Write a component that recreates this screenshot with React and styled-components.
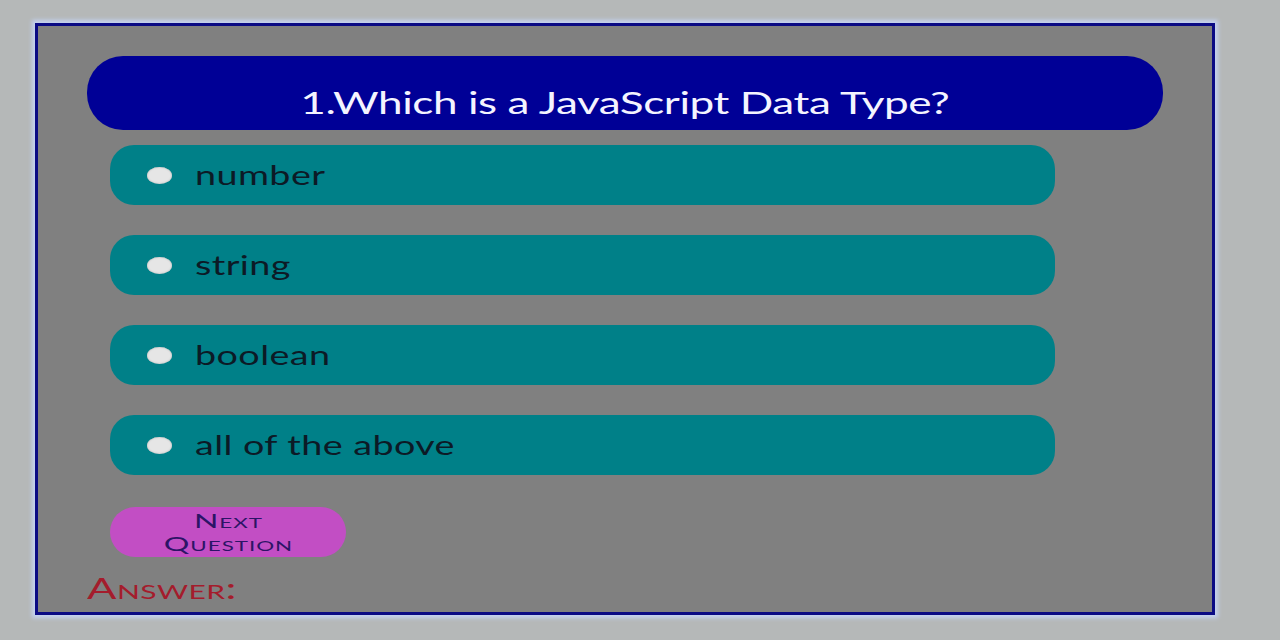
import React, { useState } from "react"
import styled, { createGlobalStyle } from "styled-components"

const GlobalStyle = createGlobalStyle`
    html, body {
        margin: 0;
        padding: 0;
        background: #b5b8b8;
        font-family: "Lato", "Open Sans", sans-serif;
    }
`

const Page = styled.div`
    height: 640px;
    padding: 23px 0 0 35px;
    box-sizing: border-box;
`

const Quiz = styled.div`
    width: 1180px;
    height: 592px;
    box-sizing: border-box;
    border: 3px solid #0a0a84;
    background: #808080;
    box-shadow: 0 0 4px 3px #c4d2f2;
    padding: 30px 0 0 49px;
    display: flex;
    flex-direction: column;
`

// the face in the picture is drawn wide, so the words are stretched sideways
const Wide = styled.span`
    display: inline-block;
    transform: scaleX(${ p => p.$x || 1.45 });
    transform-origin: ${ p => p.$origin || "left center" };
`

const Question = styled.h1`
    margin: 0;
    width: 1076px;
    height: 74px;
    box-sizing: border-box;
    padding-top: 28px;
    border-radius: 36px;
    background: #000096;
    color: #f4f4ff;
    font-size: 30px;
    font-weight: 400;
    line-height: 36px;
    text-align: center;
    letter-spacing: -0.3px;
`

const Options = styled.div`
    margin: 15px 0 0 23px;
    display: flex;
    flex-direction: column;
    gap: 30px;
`

const Option = styled.label`
    width: 945px;
    height: 60px;
    box-sizing: border-box;
    padding-left: 37px;
    border-radius: 24px;
    background: #008088;
    display: flex;
    align-items: center;
    gap: 23px;
    color: #0c1a26;
    font-size: 26px;
    letter-spacing: 0.3px;
    cursor: pointer;
`

const Radio = styled.input`
    appearance: none;
    margin: 0;
    width: 25px;
    height: 17px;
    border-radius: 50%;
    background: ${ p => p.checked ? "#3a3a3a" : "#e6e6e6" };
    box-shadow: inset 0 0 2px #b0b0b0;
    cursor: pointer;
`

const NextButton = styled.button`
    margin: 32px 0 0 23px;
    width: 236px;
    height: 50px;
    border: none;
    border-radius: 25px;
    background: #c24ec4;
    color: #2c1466;
    font-family: "Lato", sans-serif;
    font-variant: small-caps;
    font-size: 20px;
    line-height: 23px;
    letter-spacing: 0.6px;
    padding: 0;
    cursor: pointer;
`

const Answer = styled.div`
    margin-top: 16px;
    color: #a41c2c;
    font-variant: small-caps;
    font-size: 29px;
    line-height: 30px;
    letter-spacing: 0.3px;
`

const choices = ["number", "string", "boolean", "all of the above"]

const App = () => {
    const [picked, setPicked] = useState(null)

    return (
        <Page>
            <GlobalStyle />
            <Quiz>
                <Question>
                    <Wide $x={1.47} $origin="center">1.Which is a JavaScript Data Type?</Wide>
                </Question>
                <Options>
                    {choices.map(c => (
                        <Option key={c}>
                            <Radio
                                type="radio"
                                name="answer"
                                checked={picked === c}
                                onChange={() => setPicked(c)}
                            />
                            <Wide>{c}</Wide>
                        </Option>
                    ))}
                </Options>
                <NextButton>
                    <Wide $x={1.6} $origin="center">Next<br />Question</Wide>
                </NextButton>
                <Answer>
                    <Wide $x={1.5}>Answer:</Wide>
                </Answer>
            </Quiz>
        </Page>
    )
}

export default App
